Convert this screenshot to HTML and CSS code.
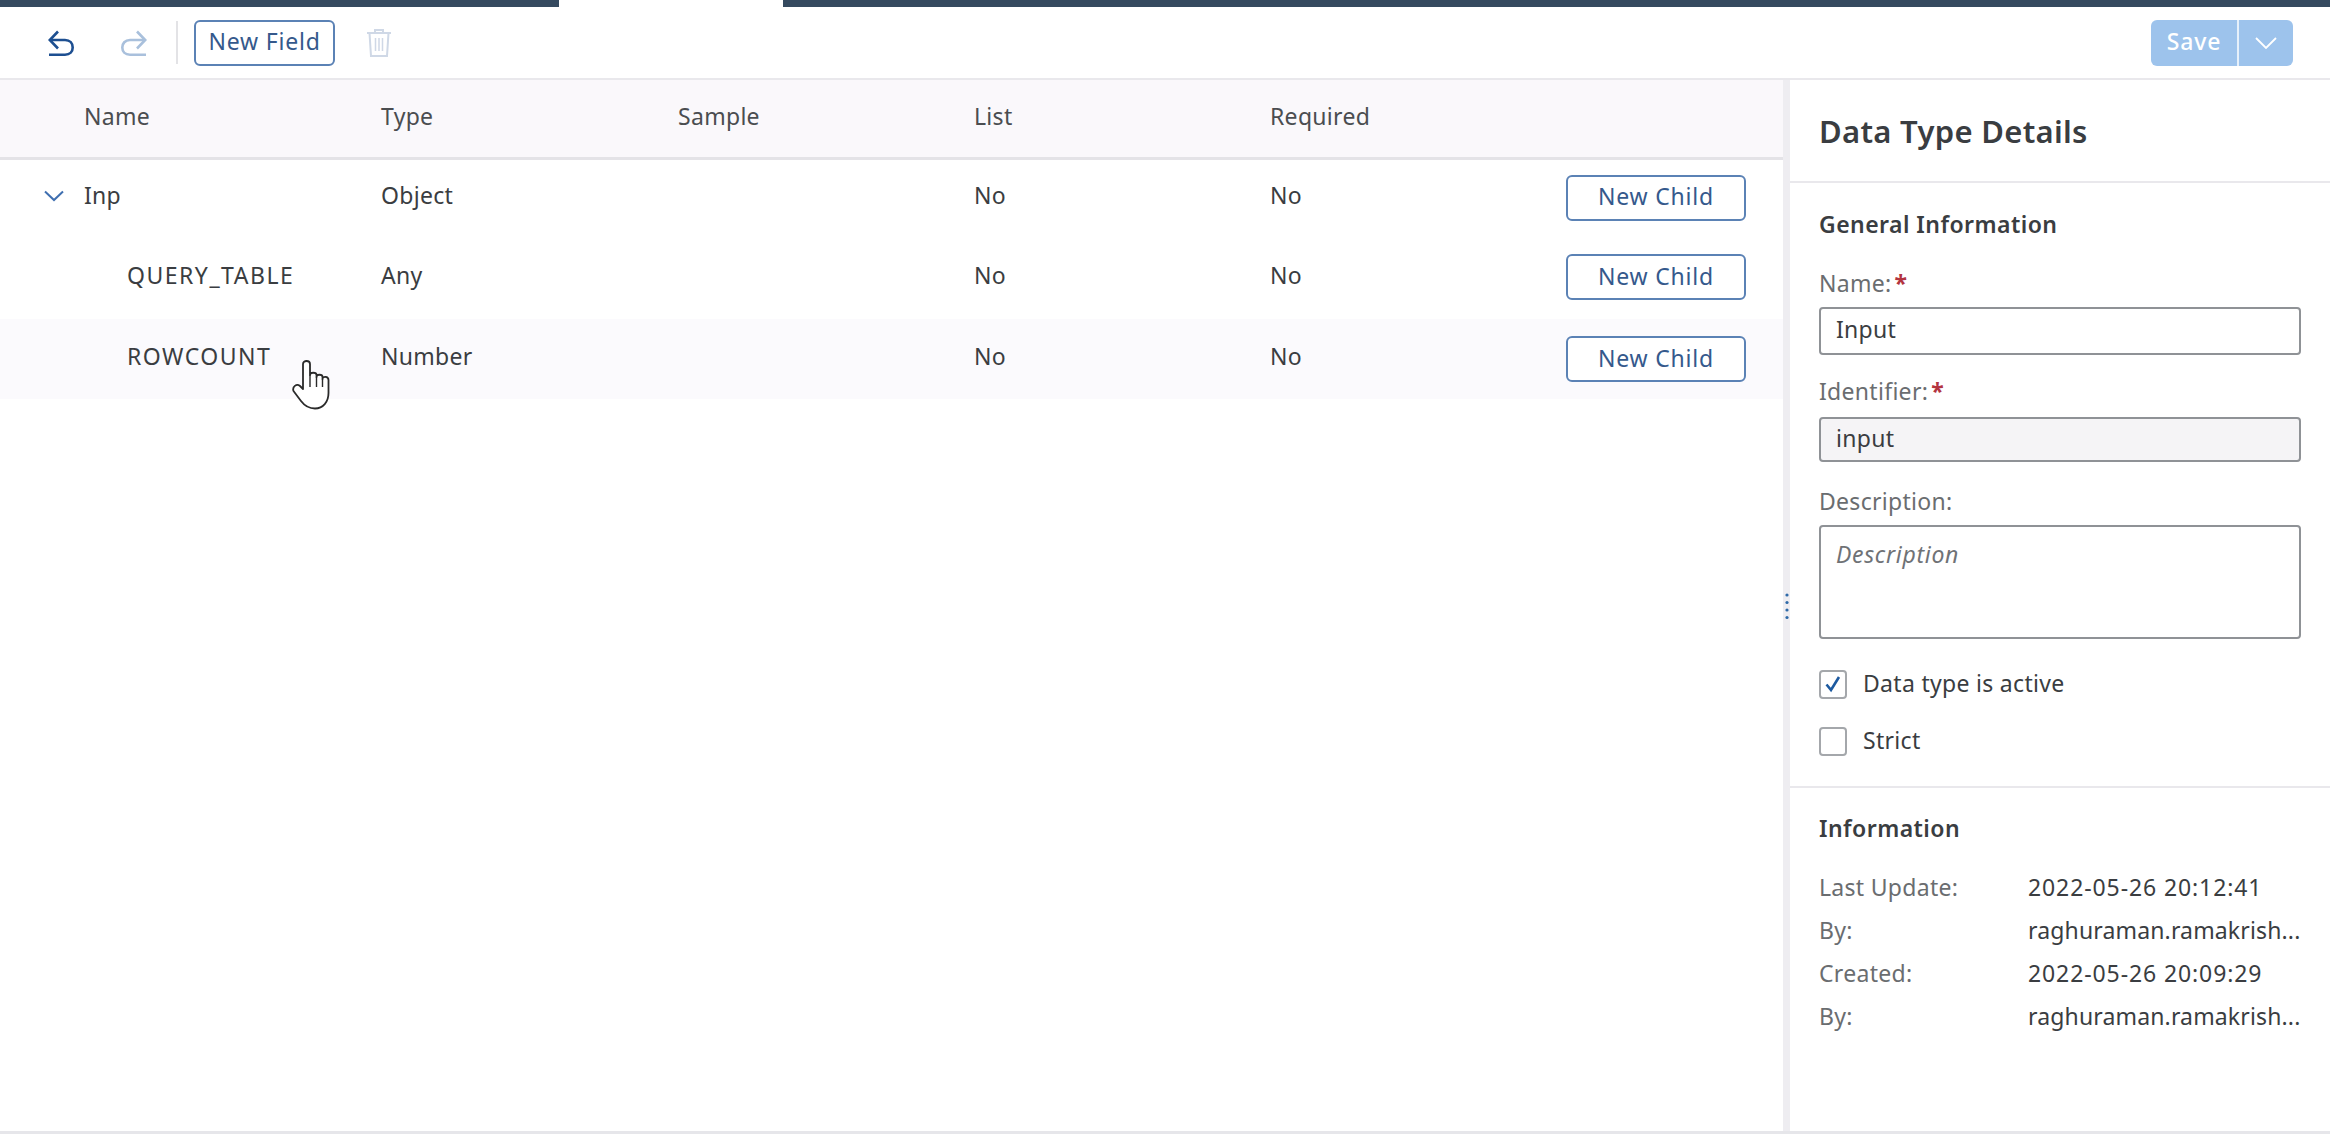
FILE: index.html
```html
<!DOCTYPE html>
<html lang="en">

<head>
  <title>Data Type Details</title>
  <link rel="stylesheet" href="styles.css">
</head>

<body>
  <div class="topbar">
    <div class="topbar-left"></div>
    <div class="topbar-gap"></div>
    <div class="topbar-right"></div>
  </div>

  <div class="toolbar">
    <button class="icon-btn">
      <svg width="26" height="26" viewBox="0 0 26 26" fill="none" stroke="#1d4f91" stroke-width="2.6">
        <path d="M10 1.5 L1.8 10 L10 18.5" />
        <path d="M2 10 H17 C22 10 24.7 13.5 24.7 17.5 C24.7 21.5 22 24.7 17 24.7 H1" />
      </svg>
    </button>
    <button class="icon-btn">
      <svg width="26" height="26" viewBox="0 0 26 26" fill="none" stroke="#a9c0dc" stroke-width="2.6">
        <path d="M16 1.5 L24.2 10 L16 18.5" />
        <path d="M24 10 H9 C4 10 1.3 13.5 1.3 17.5 C1.3 21.5 4 24.7 9 24.7 H25" />
      </svg>
    </button>
    <div class="toolbar-sep"></div>
    <button class="btn btn-field">New Field</button>
    <button class="icon-btn icon-trash">
      <svg width="26" height="30" viewBox="0 0 26 30" fill="none" stroke="#cfd8e6" stroke-width="2">
        <path d="M1 5 H25 M9 5 V2 H17 V5" />
        <path d="M3.5 5 L5 28 H21 L22.5 5" />
        <path d="M9.5 10 V23 M13 10 V23 M16.5 10 V23" stroke-width="1.5" />
      </svg>
    </button>
    <div class="save-group">
      <div class="save-main">Save</div>
      <div class="save-arrow">
        <svg width="22" height="12" viewBox="0 0 22 12" fill="none" stroke="#fff" stroke-width="1.8">
          <path d="M1 1 L11 11 L21 1" />
        </svg>
      </div>
    </div>
  </div>

  <div class="main">
    <div class="table">
      <div class="row row-head">
        <div class="cell cell-name">Name</div>
        <div class="cell">Type</div>
        <div class="cell">Sample</div>
        <div class="cell">List</div>
        <div class="cell">Required</div>
      </div>
      <div class="row row-first">
        <div class="cell cell-name">
          <svg class="expander" width="20" height="12" viewBox="0 0 20 12" fill="none" stroke="#3f6fb0" stroke-width="2">
            <path d="M1 1.5 L10 10 L19 1.5" />
          </svg>
          Inp
        </div>
        <div class="cell">Object</div>
        <div class="cell"></div>
        <div class="cell">No</div>
        <div class="cell">No</div>
        <button class="btn btn-child">New Child</button>
      </div>
      <div class="row row-second">
        <div class="cell cell-name cell-child">QUERY_TABLE</div>
        <div class="cell">Any</div>
        <div class="cell"></div>
        <div class="cell">No</div>
        <div class="cell">No</div>
        <button class="btn btn-child">New Child</button>
      </div>
      <div class="row row-hover">
        <div class="cell cell-name cell-child">ROWCOUNT</div>
        <div class="cell">Number</div>
        <div class="cell"></div>
        <div class="cell">No</div>
        <div class="cell">No</div>
        <button class="btn btn-child">New Child</button>
        <svg class="hand" width="38" height="50" viewBox="0 0 38 50" fill="#fff" stroke="#2a2a2a" stroke-width="1.8" stroke-linejoin="round">
          <path d="M11 29 V4 C11 0 18 0 18 4 V15 C18 12 24.5 12 24.5 15 V17 C24.5 14 30.5 14 30.5 17 V19 C30.5 16 36.5 16 36.5 20 V33 C36.5 42 31 48.5 23 48.5 C16 48.5 12 45 9 41 L1.5 31 C0 27 4.5 23 8 26 L11 29 Z" />
          <path d="M18 15 V27 M24.5 17 V27 M30.5 19 V27" fill="none" stroke-width="1.4" />
        </svg>
      </div>
    </div>

    <div class="splitter">
      <svg width="4" height="28" viewBox="0 0 4 28" fill="#2f6aa8">
        <circle cx="2" cy="3" r="1.6" />
        <circle cx="2" cy="10.5" r="1.6" />
        <circle cx="2" cy="18" r="1.6" />
        <circle cx="2" cy="25.5" r="1.6" />
      </svg>
    </div>

    <div class="panel">
      <div class="panel-title">Data Type Details</div>

      <div class="panel-section">
        <div class="section-title">General Information</div>
        <label class="field-label">Name:<span class="req">*</span></label>
        <div class="input">Input</div>
        <label class="field-label label-id">Identifier:<span class="req">*</span></label>
        <div class="input input-readonly">input</div>
        <label class="field-label label-desc">Description:</label>
        <div class="input textarea">Description</div>
        <div class="check-row">
          <span class="check">
            <svg width="18" height="18" viewBox="0 0 18 18" fill="none" stroke="#1d5aa0" stroke-width="2.6">
              <path d="M2.5 9.5 L7 15 L15 2" />
            </svg>
          </span>
          <span class="check-text">Data type is active</span>
        </div>
        <div class="check-row">
          <span class="check"></span>
          <span class="check-text">Strict</span>
        </div>
      </div>

      <div class="panel-section info-section">
        <div class="section-title">Information</div>
        <div class="info-grid">
          <div class="info-key">Last Update:</div>
          <div class="info-val info-date">2022-05-26 20:12:41</div>
          <div class="info-key">By:</div>
          <div class="info-val">raghuraman.ramakrish...</div>
          <div class="info-key">Created:</div>
          <div class="info-val info-date">2022-05-26 20:09:29</div>
          <div class="info-key">By:</div>
          <div class="info-val">raghuraman.ramakrish...</div>
        </div>
      </div>
    </div>
  </div>
</body>

</html>
```

FILE: styles.css
```css
html {
  overflow: hidden;
}

body {
  overflow: hidden;
  margin: 0;
  padding: 0;
  width: 2330px;
  height: 1136px;
  background: #fff;
  color: #3a3d41;
  font-family: "Noto Sans", "Open Sans", sans-serif;
  font-size: 23px;
  letter-spacing: 0.3px;
  display: flex;
  flex-direction: column;
}

button {
  font-family: inherit;
  font-size: inherit;
  letter-spacing: inherit;
  cursor: pointer;
}

.topbar {
  display: flex;
  height: 7px;
  flex: none;
}

.topbar-left {
  width: 559px;
  background: #354a5f;
}

.topbar-gap {
  width: 224px;
}

.topbar-right {
  flex: 1;
  background: #354a5f;
}

.toolbar {
  display: flex;
  align-items: center;
  height: 73px;
  flex: none;
  box-sizing: border-box;
  padding: 0 37px 0 48px;
  border-bottom: 2px solid #e9e8ec;
}

.icon-btn {
  display: flex;
  padding: 0;
  border: 0;
  background: none;
}

.icon-btn + .icon-btn {
  margin-left: 47px;
}

.toolbar-sep {
  width: 2px;
  height: 43px;
  margin: 0 16px 0 29px;
  background: #e3e3e6;
}

.btn {
  border: 2px solid #5b82b5;
  border-radius: 6px;
  background: #fff;
  color: #35598c;
  padding: 0 0 3px;
  letter-spacing: 0.8px;
}

.btn-field {
  width: 141px;
  height: 46px;
}

.icon-trash {
  margin-left: 31px;
}

.save-group {
  display: flex;
  height: 46px;
  margin-left: auto;
  border-radius: 6px;
  overflow: hidden;
  background: #9dc3ec;
  color: #fff;
}

.save-main {
  display: flex;
  align-items: center;
  justify-content: center;
  width: 88px;
  padding-bottom: 3px;
  box-sizing: border-box;
  font-weight: 500;
  letter-spacing: 0.8px;
  border-right: 2px solid #e6f0fa;
}

.save-arrow {
  display: flex;
  align-items: center;
  justify-content: center;
  width: 54px;
}

.main {
  display: flex;
  flex: 1;
  border-bottom: 3px solid #e6e6ea;
  margin-bottom: 2px;
  min-height: 0;
}

.table {
  width: 1783px;
  flex: none;
}

.row {
  position: relative;
  display: grid;
  grid-template-columns: 381px 297px 296px 296px 296px 180px;
  align-items: center;
}

.row-head {
  height: 80px;
  box-sizing: border-box;
  background: #faf8fb;
  border-bottom: 3px solid #e4e3e7;
}

.row-first {
  height: 75px;
}

.row-second {
  height: 84px;
}

.row-second .cell {
  margin-bottom: 3px;
}

.row-hover {
  height: 80px;
  background: #fbfafd;
}

.cell {
  line-height: 1;
  white-space: nowrap;
  margin-bottom: 5px;
}

.row-head .cell {
  color: #4a4d50;
}

.cell-name {
  position: relative;
  padding-left: 84px;
}

.cell-child {
  padding-left: 127px;
  letter-spacing: 1.5px;
}

.expander {
  position: absolute;
  left: 44px;
  top: 6px;
}

.btn-child {
  height: 46px;
  width: 180px;
}

.hand {
  position: absolute;
  left: 292px;
  top: 41px;
}

.splitter {
  display: flex;
  align-items: center;
  justify-content: center;
  width: 7px;
  flex: none;
  background: #eeedf1;
}

.panel {
  flex: 1;
  min-width: 0;
}

.panel-title {
  height: 103px;
  box-sizing: border-box;
  padding: 33px 29px 0;
  font-size: 31px;
  line-height: 36px;
  font-weight: 600;
  border-bottom: 2px solid #e9e8ec;
}

.panel-section {
  padding: 0 29px;
}

.section-title {
  padding-top: 26px;
  font-size: 23px;
  line-height: 30px;
  font-weight: 600;
  letter-spacing: 0.45px;
}

.field-label {
  display: block;
  margin: 24px 0 12px;
  line-height: 24px;
  color: #6a6d70;
}

.section-title + .field-label {
  margin-top: 32px;
}

.label-id {
  margin-bottom: 14px;
}

.label-desc {
  margin-top: 27px;
}

.req {
  margin-left: 3px;
  color: #b3343f;
  font-weight: 700;
}

.input {
  box-sizing: border-box;
  height: 48px;
  width: 482px;
  padding: 0 15px;
  line-height: 41px;
  border: 2px solid #8f9296;
  border-radius: 4px;
}

.input-readonly {
  height: 45px;
  line-height: 39px;
  background: #f5f4f6;
}

.textarea {
  height: 114px;
  color: #6f7276;
  font-style: italic;
  line-height: 38px;
  padding-top: 8px;
  letter-spacing: 0.7px;
}

.check-row {
  display: flex;
  align-items: center;
  gap: 16px;
  height: 30px;
  margin-top: 30px;
}

.check-row + .check-row {
  margin-top: 27px;
}

.check-text {
  margin-bottom: 3px;
}

.check {
  display: flex;
  align-items: center;
  justify-content: center;
  box-sizing: border-box;
  width: 28px;
  height: 29px;
  border: 2px solid #a4a7ab;
  border-radius: 4px;
}

.info-section {
  margin-top: 30px;
  border-top: 2px solid #e9e8ec;
}

.info-section .section-title {
  padding-top: 25px;
}

.info-grid {
  display: grid;
  grid-template-columns: 209px 272px;
  grid-auto-rows: 43px;
  align-items: center;
  margin-top: 22px;
}

.info-key {
  color: #6a6d70;
}

.info-val {
  white-space: nowrap;
  letter-spacing: 0.15px;
}

.info-date {
  letter-spacing: 0.9px;
}
```
